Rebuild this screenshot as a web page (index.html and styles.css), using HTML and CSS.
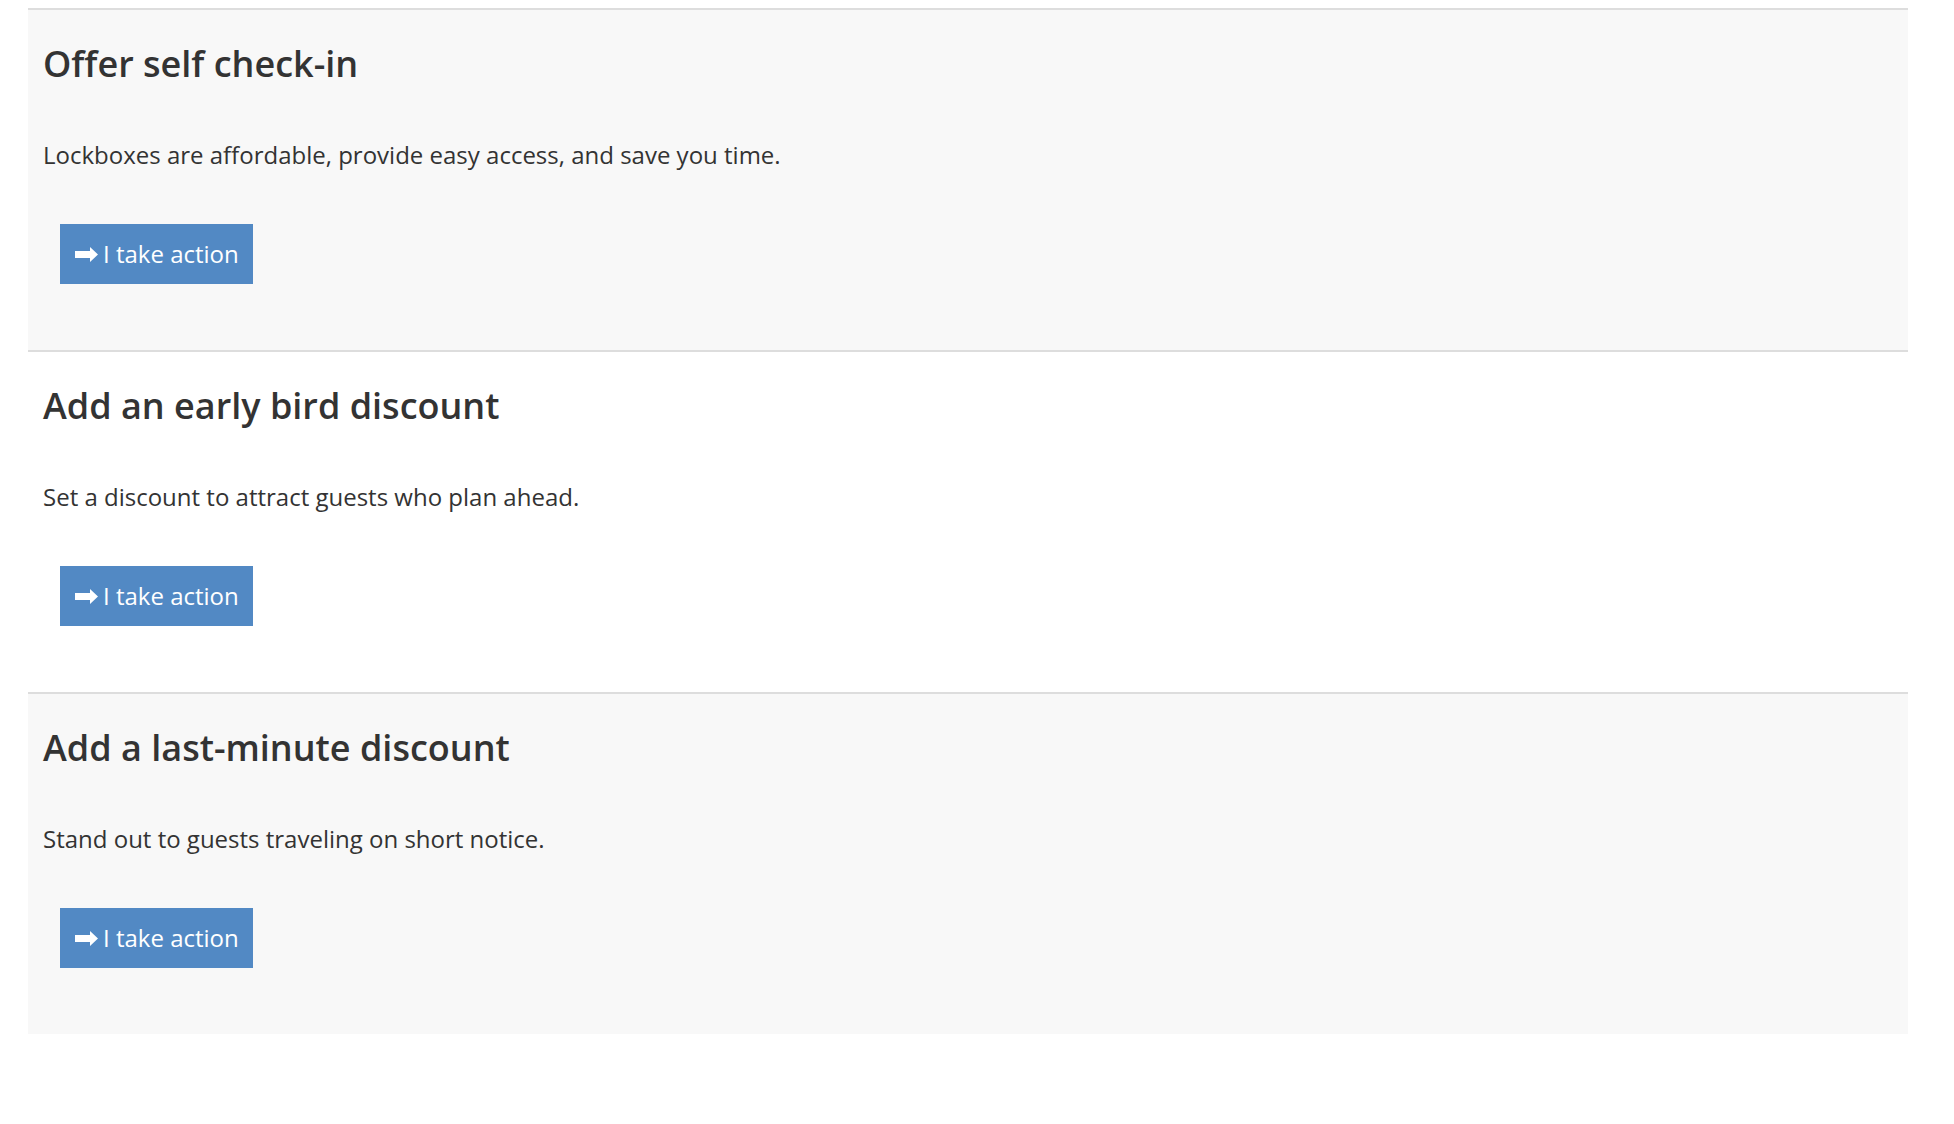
FILE: index.html
```html
<!DOCTYPE html>
<html lang="en">
<head>
<meta charset="utf-8">
<title>Recommendations</title>
<link rel="stylesheet" href="styles.css">
</head>
<body>
<div class="list">
  <section class="item item-shaded">
    <h2 class="item-title">Offer self check-in</h2>
    <p class="item-text">Lockboxes are affordable, provide easy access, and save you time.</p>
    <a class="btn" href="#"><svg class="btn-icon" viewBox="0 0 23 15" aria-hidden="true"><path d="M0 4h15V0l8 7.5-8 7.5v-4H0z" fill="#fff"/></svg>I take action</a>
  </section>
  <section class="item">
    <h2 class="item-title">Add an early bird discount</h2>
    <p class="item-text">Set a discount to attract guests who plan ahead.</p>
    <a class="btn" href="#"><svg class="btn-icon" viewBox="0 0 23 15" aria-hidden="true"><path d="M0 4h15V0l8 7.5-8 7.5v-4H0z" fill="#fff"/></svg>I take action</a>
  </section>
  <section class="item item-shaded">
    <h2 class="item-title">Add a last-minute discount</h2>
    <p class="item-text">Stand out to guests traveling on short notice.</p>
    <a class="btn" href="#"><svg class="btn-icon" viewBox="0 0 23 15" aria-hidden="true"><path d="M0 4h15V0l8 7.5-8 7.5v-4H0z" fill="#fff"/></svg>I take action</a>
  </section>
</div>
</body>
</html>
```
FILE: styles.css
```css
html, body {
  background: #fff;
}
body {
  margin: 8px;
  font-family: "Open Sans", "Noto Sans", sans-serif;
  color: #333;
}
.list {
  margin: 0 38px 0 20px;
}
.item {
  border-top: 2px solid #ddd;
  padding: 32px 16px 0 15px;
  box-sizing: content-box;
  height: 308px;
  display: flex;
  flex-direction: column;
  align-items: flex-start;
}
.item-shaded {
  background: #f8f8f8;
}
.item-title {
  margin: 0;
  font-size: 36px;
  line-height: 44px;
  font-weight: 600;
  color: #333;
}
.item-text {
  margin: 53px 0 0 0;
  font-size: 24px;
  line-height: 32px;
  color: #333;
}
.btn {
  margin: 53px 0 0 17px;
  height: 60px;
  box-sizing: border-box;
  padding: 0 14px 2px 15px;
  display: inline-flex;
  align-items: center;
  background: #5289c4;
  color: #fff;
  font-size: 24px;
  text-decoration: none;
}
.btn-icon {
  width: 23px;
  height: 15px;
  margin: 2px 5px 0 0;
  flex: none;
}
```
